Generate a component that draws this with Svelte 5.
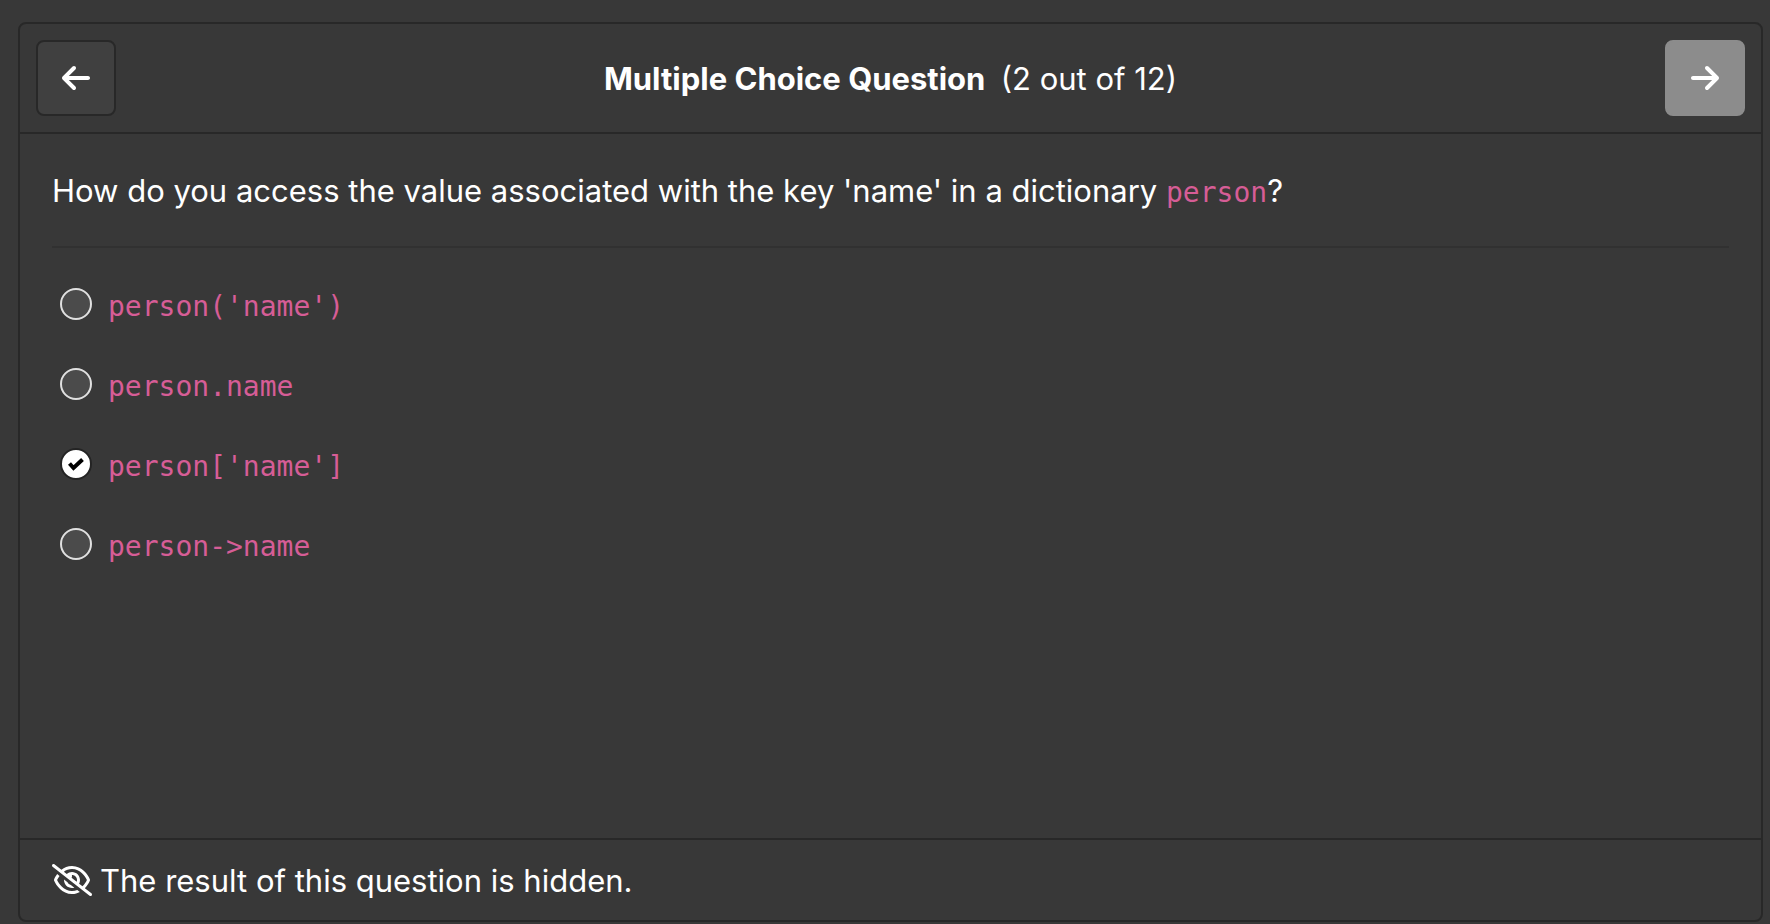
<script>
  const options = ["person('name')", 'person.name', "person['name']", 'person->name'];
  let selected = $state(2);
</script>

<div class="page">
  <main class="panel">
    <header>
      <button class="nav" aria-label="Previous question">
        <svg width="28" height="32" viewBox="0 0 448 512" aria-hidden="true">
          <path d="M9.4 233.4c-12.5 12.5-12.5 32.8 0 45.3l160 160c12.5 12.5 32.8 12.5 45.3 0s12.5-32.8 0-45.3L109.2 288 416 288c17.7 0 32-14.3 32-32s-14.3-32-32-32l-306.7 0L214.6 118.6c12.5-12.5 12.5-32.8 0-45.3s-32.8-12.5-45.3 0l-160 160z" />
        </svg>
      </button>
      <h1>Multiple Choice Question <span>(2 out of 12)</span></h1>
      <button class="nav next" aria-label="Next question">
        <svg width="28" height="32" viewBox="0 0 448 512" aria-hidden="true">
          <path d="M438.6 278.6c12.5-12.5 12.5-32.8 0-45.3l-160-160c-12.5-12.5-32.8-12.5-45.3 0s-12.5 32.8 0 45.3L338.8 224 32 224c-17.7 0-32 14.3-32 32s14.3 32 32 32l306.7 0L233.4 393.4c-12.5 12.5-12.5 32.8 0 45.3s32.8 12.5 45.3 0l160-160z" />
        </svg>
      </button>
    </header>

    <section class="body">
      <p id="question" class="question">
        How do you access the value associated with the key 'name' in a dictionary <code>person</code>?
      </p>
      <div class="options" role="radiogroup" aria-labelledby="question">
        {#each options as option, i}
          <label class="option">
            <input type="radio" name="answer" value={i} bind:group={selected} />
            <code>{option}</code>
          </label>
        {/each}
      </div>
    </section>

    <footer>
      <svg width="40" height="32" viewBox="0 0 640 512" aria-hidden="true">
        <path d="M38.8 5.1C28.4-3.1 13.3-1.2 5.1 9.2S-1.2 34.7 9.2 42.9l592 464c10.4 8.2 25.5 6.3 33.7-4.1s6.3-25.5-4.1-33.7L525.6 386.7c39.600-40.600 66.400-86.100 79.900-118.400c3.300-7.900 3.300-16.700 0-24.600c-14.900-35.700-46.200-87.700-93-131.100C465.500 68.800 400.800 32 320 32c-68.200 0-125 26.300-169.300 60.800L38.800 5.100zm151 118.300C226 97.700 269.500 80 320 80c65.200 0 118.800 29.600 159.900 67.700C518.400 183.500 545 226 558.600 256c-12.600 28-36.600 66.800-70.900 100.900l-53.800-42.200c9.100-17.600 14.200-37.500 14.200-58.700c0-70.700-57.300-128-128-128c-32.200 0-61.700 11.900-84.200 31.500l-46.100-36.100zM394.900 284.200l-81.500-63.900c4.200-8.500 6.600-18.200 6.600-28.300c0-5.500-.7-10.900-2-16c.7 0 1.300 0 2 0c44.200 0 80 35.800 80 80c0 9.900-1.800 19.400-5.100 28.200zm9.400 130.300C378.800 425.400 350.700 432 320 432c-65.200 0-118.800-29.600-159.900-67.700C121.600 328.500 95 286 81.400 256c8.300-18.400 21.500-41.500 39.400-64.800L83.100 161.500C60.300 191.200 44 220.800 34.500 243.700c-3.300 7.900-3.300 16.700 0 24.600c14.900 35.700 46.200 87.700 93 131.100C174.500 443.200 239.200 480 320 480c47.800 0 89.900-12.900 126.200-32.500l-41.900-33zM192 256c0 70.700 57.300 128 128 128c13.300 0 26.100-2 38.200-5.800L302 334c-23.500-5.400-43.100-21.200-53.700-42.300l-56.100-44.200c-.2 2.800-.3 5.600-.3 8.500z" />
      </svg>
      <span>The result of this question is hidden.</span>
    </footer>
  </main>
</div>

<style>
  :global(body) {
    margin: 0;
    background: #383838;
  }

  .page {
    box-sizing: border-box;
    display: flex;
    min-height: 100vh;
    padding: 22px 7px 2px 18px;
    background: #383838;
    color: #fff;
    font-family: Inter, sans-serif;
    font-size: 31px;
    line-height: 46px;
  }

  .panel {
    display: flex;
    flex: 1;
    flex-direction: column;
    border: 2px solid #282828;
    border-radius: 8px;
  }

  header {
    display: flex;
    align-items: center;
    justify-content: space-between;
    padding: 16px;
    border-bottom: 2px solid #282828;
  }

  h1 {
    margin: 0;
    padding-top: 2px;
    font-size: 31px;
    font-weight: 700;
  }

  h1 span {
    margin-left: 8px;
    font-weight: 400;
  }

  .nav {
    display: flex;
    align-items: center;
    justify-content: center;
    box-sizing: border-box;
    width: 80px;
    height: 76px;
    padding: 0;
    border: 2px solid #282828;
    border-radius: 8px;
    background: #404040;
    color: #fff;
  }

  .nav.next {
    border-color: #8c8c8c;
    background: #8c8c8c;
  }

  svg {
    flex: none;
    fill: currentColor;
  }

  .body {
    flex: 1;
    padding: 32px;
  }

  .question {
    margin: 0;
    padding: 2px 0 32px;
    border-bottom: 2px solid #313131;
  }

  code {
    color: #d65d96;
    font-family: "DejaVu Sans Mono", monospace;
    font-size: 28px;
    line-height: 28px;
  }

  .options {
    display: flex;
    flex-direction: column;
    align-items: flex-start;
    gap: 32px;
    padding: 32px 8px;
  }

  .option {
    display: flex;
    align-items: center;
    gap: 16px;
  }

  .option code {
    padding-top: 6px;
    line-height: 42px;
  }

  .option input {
    appearance: none;
    box-sizing: border-box;
    width: 32px;
    height: 32px;
    margin: 0;
    border: 2px solid #e0e0e0;
    border-radius: 50%;
    background: #4b4b4b;
  }

  .option input:checked {
    border-color: #242424;
    background: #fff url("data:image/svg+xml,%3Csvg xmlns='http://www.w3.org/2000/svg' viewBox='0 0 28 28'%3E%3Cpath d='M7.5 13.5l4 4.500 9-8.500' fill='none' stroke='black' stroke-width='4'/%3E%3C/svg%3E") center / 28px no-repeat;
    background-origin: padding-box;
  }

  footer {
    display: flex;
    align-items: center;
    gap: 8px;
    padding: 16px 32px;
    border-top: 2px solid #282828;
  }

  footer span {
    padding-top: 2px;
  }
</style>
